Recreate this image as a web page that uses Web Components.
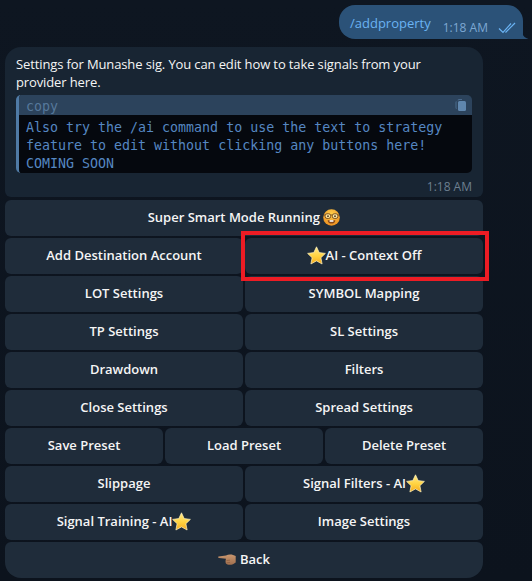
<!DOCTYPE html>
<html>
<head>
<meta charset="utf-8">
<style>
  html, body { margin: 0; height: 100%; }
  body { background: #0e1621; overflow: hidden; }
</style>
</head>
<body>
<tg-chat>
  <tg-outgoing time="1:18 AM">/addproperty</tg-outgoing>
  <tg-bubble time="1:18 AM">
    Settings for Munashe sig. You can edit how to take signals from your provider here.
    <tg-code slot="code" lang="copy">Also try the /ai command to use the text to strategy
feature to edit without clicking any buttons here!
COMING SOON</tg-code>
  </tg-bubble>
  <tg-keyboard>
    <tg-row><tg-key>Super Smart Mode Running <tg-emoji name="nerd"></tg-emoji></tg-key></tg-row>
    <tg-row>
      <tg-key>Add Destination Account</tg-key>
      <tg-key marked><tg-emoji name="star"></tg-emoji>AI - Context Off</tg-key>
    </tg-row>
    <tg-row><tg-key>LOT Settings</tg-key><tg-key>SYMBOL Mapping</tg-key></tg-row>
    <tg-row><tg-key>TP Settings</tg-key><tg-key>SL Settings</tg-key></tg-row>
    <tg-row><tg-key>Drawdown</tg-key><tg-key>Filters</tg-key></tg-row>
    <tg-row><tg-key>Close Settings</tg-key><tg-key>Spread Settings</tg-key></tg-row>
    <tg-row><tg-key>Save Preset</tg-key><tg-key>Load Preset</tg-key><tg-key>Delete Preset</tg-key></tg-row>
    <tg-row><tg-key>Slippage</tg-key><tg-key>Signal Filters - AI<tg-emoji name="star"></tg-emoji></tg-key></tg-row>
    <tg-row><tg-key>Signal Training - AI<tg-emoji name="star"></tg-emoji></tg-key><tg-key>Image Settings</tg-key></tg-row>
    <tg-row last><tg-key><tg-emoji name="hand" style="margin-right:4px"></tg-emoji>Back</tg-key></tg-row>
  </tg-keyboard>
</tg-chat>

<script>
  const FONT = '"Open Sans", "Noto Sans", sans-serif';

  customElements.define('tg-chat', class extends HTMLElement {
    constructor() {
      super();
      this.attachShadow({ mode: 'open' }).innerHTML = `
        <style>
          :host {
            display: flex;
            flex-direction: column;
            width: 532px;
            height: 581px;
            box-sizing: border-box;
            padding: 5px 0 0 5px;
            font-family: ${FONT};
            color: #f5f5f5;
            background: linear-gradient(180deg, #0e1621, #0c131d);
          }
        </style>
        <slot></slot>`;
    }
  });

  customElements.define('tg-outgoing', class extends HTMLElement {
    constructor() {
      super();
      this.attachShadow({ mode: 'open' }).innerHTML = `
        <style>
          :host {
            display: flex;
            align-self: flex-end;
            align-items: flex-start;
            position: relative;
            box-sizing: border-box;
            height: 34px;
            width: 184px;
            margin-right: 9px;
            margin-bottom: 8px;
            padding: 9px 0 0 11px;
            background: #2b5278;
            border-radius: 16px 16px 0 16px;
            font-size: 13px;
            line-height: 18px;
            color: #6ab3f3;
          }
          .time {
            margin-left: 12px;
            padding-top: 5px;
            font-size: 12px;
            line-height: 17px;
            color: #7da8d3;
            white-space: nowrap;
          }
          svg.ticks { margin: 8px 0 0 10px; flex: none; }
          svg.tail { position: absolute; right: -6px; bottom: 0; }
        </style>
        <slot></slot>
        <span class="time">${this.getAttribute('time')}</span>
        <svg class="ticks" width="18" height="12" viewBox="0 0 18 12" fill="none" stroke="#6ab3f3" stroke-width="1.2">
          <path d="M1 6.5 5 10.5 13 1.5"/><path d="M7.5 10.5 17 1"/>
        </svg>
        <svg class="tail" width="7" height="6" viewBox="0 0 7 6"><path d="M0 0C1 3 3 5 6.5 6H0Z" fill="#2b5278"/></svg>`;
    }
  });

  customElements.define('tg-bubble', class extends HTMLElement {
    constructor() {
      super();
      this.attachShadow({ mode: 'open' }).innerHTML = `
        <style>
          :host {
            display: block;
            box-sizing: border-box;
            width: 478px;
            height: 150px;
            padding: 8px 11px 0;
            background: #182533;
            border-radius: 16px 16px 6px 6px;
            font-size: 13px;
            line-height: 18px;
            letter-spacing: -.12px;
          }
          .text { height: 40px; }
          .time {
            margin-top: 5px;
            text-align: right;
            font-size: 12px;
            line-height: 17px;
            letter-spacing: 0;
            color: #6d7f8f;
          }
        </style>
        <div class="text"><slot></slot></div>
        <slot name="code"></slot>
        <div class="time">${this.getAttribute('time')}</div>`;
    }
  });

  customElements.define('tg-code', class extends HTMLElement {
    constructor() {
      super();
      this.attachShadow({ mode: 'open' }).innerHTML = `
        <style>
          :host {
            display: block;
            overflow: hidden;
            border-left: 3px solid #4f7aa5;
            border-radius: 5px;
            font-family: "DejaVu Sans Mono", "Liberation Mono", monospace;
            font-size: 13.3px;
            line-height: 18px;
            letter-spacing: 0;
            color: #5587c2;
          }
          .head {
            display: flex;
            justify-content: space-between;
            align-items: center;
            height: 20px;
            box-sizing: border-box;
            padding: 3px 5px 0 7px;
            background: #2c435c;
            color: #56789b;
          }
          pre {
            margin: 0;
            height: 58px;
            box-sizing: border-box;
            padding: 4px 7px 0;
            background: #05080e;
            font: inherit;
          }
        </style>
        <div class="head">
          <span>${this.getAttribute('lang')}</span>
          <svg width="11" height="12" viewBox="0 0 11 12" fill="#5f86ad" style="margin:-3px 1px 0 0">
            <path d="M2.5 1.5A1.5 1.5 0 0 1 4 0H7V1H4Q3.5 1 3.3 1.5Z" opacity=".6"/>
            <path d="M.5 3.5A1.5 1.5 0 0 1 1.5 2V9A1 1 0 0 0 2.5 10H2A1.5 1.5 0 0 1 .5 8.5Z" opacity=".6"/>
            <rect x="3" y="2" width="8" height="10" rx="1.5"/>
          </svg>
        </div>
        <pre><slot></slot></pre>`;
    }
  });

  customElements.define('tg-keyboard', class extends HTMLElement {
    constructor() {
      super();
      this.attachShadow({ mode: 'open' }).innerHTML = `
        <style>
          :host {
            display: flex;
            flex-direction: column;
            gap: 2px;
            width: 478px;
            margin-top: 3px;
          }
        </style>
        <slot></slot>`;
    }
  });

  customElements.define('tg-row', class extends HTMLElement {
    constructor() {
      super();
      this.attachShadow({ mode: 'open' }).innerHTML = `
        <style>
          :host { display: flex; gap: 2px; height: 36px; }
          :host([last]) ::slotted(tg-key) { border-radius: 6px 6px 16px 16px; }
        </style>
        <slot></slot>`;
    }
  });

  customElements.define('tg-key', class extends HTMLElement {
    constructor() {
      super();
      this.attachShadow({ mode: 'open' }).innerHTML = `
        <style>
          :host {
            display: flex;
            flex: 1 1 0;
            min-width: 0;
            box-sizing: border-box;
            padding-bottom: 2px;
            position: relative;
            align-items: center;
            justify-content: center;
            background: #1f2c3a;
            border-radius: 6px;
            font-size: 13px;
            font-weight: 600;
            letter-spacing: 0;
            color: #f5f5f5;
          }
          :host([marked]) { z-index: 1; }
          .label { display: inline-flex; align-items: center; white-space: pre; }
          .mark {
            display: none;
            position: absolute;
            left: -4px;
            top: -7px;
            right: -6px;
            bottom: -7px;
            border: 4px solid #ed1c24;
            pointer-events: none;
          }
          :host([marked]) .mark { display: block; }
        </style>
        <span class="label"><slot></slot></span>
        <div class="mark"></div>`;
    }
  });

  const EMOJI = {
    star: `<svg width="19" height="19" viewBox="0 0 19 19">
      <defs><linearGradient id="s" x1="0" y1="0" x2="0" y2="1"><stop offset="0" stop-color="#ffe98a"/><stop offset=".55" stop-color="#ffd23f"/><stop offset="1" stop-color="#f4a91f"/></linearGradient></defs>
      <path d="M9.5 .8 12.2 6.6 18.4 7.4 13.9 11.7 15.1 18 9.5 14.9 3.9 18 5.1 11.7 .6 7.4 6.8 6.6Z" fill="url(#s)" stroke="#fff3c0" stroke-width=".7" stroke-linejoin="round"/>
    </svg>`,
    nerd: `<svg width="17" height="17" viewBox="0 0 17 17">
      <defs><radialGradient id="n" cx=".5" cy=".3" r=".75"><stop offset="0" stop-color="#ffcf4a"/><stop offset="1" stop-color="#ea8a1e"/></radialGradient></defs>
      <circle cx="8.5" cy="8.5" r="8.3" fill="url(#n)"/>
      <g fill="#ffe7a0" stroke="#6e4519" stroke-width=".9"><rect x="2.2" y="4.8" width="5.4" height="4.6" rx="1.8"/><rect x="9.4" y="4.8" width="5.4" height="4.6" rx="1.8"/></g>
      <path d="M7.5 6h2M.8 6h1.5M14.7 6h1.5" stroke="#6e4519" stroke-width=".9"/>
      <circle cx="5" cy="7.2" r=".9" fill="#4a3520"/><circle cx="12" cy="7.2" r=".9" fill="#4a3520"/>
      <path d="M4.6 11.2h7.8Q12 14.6 8.5 14.6T4.6 11.2Z" fill="#8a4818"/>
      <path d="M6.6 11.2h3.8v1.6h-3.8Z" fill="#fff"/>
    </svg>`,
    hand: `<svg width="18" height="11" viewBox="0 0 18 11">
      <defs><linearGradient id="h" x1="0" y1="0" x2="0" y2="1"><stop offset="0" stop-color="#c9976f"/><stop offset="1" stop-color="#a06f4e"/></linearGradient></defs>
      <path d="M.5 2.6 8 1.4C10 .4 13 .2 15 1L17.7 2V8.4L15 10.2C12 11.2 9 10.8 8 9.4 7.3 8.4 7.5 6 8 4.8L1 4C0 3.8 0 2.9 .5 2.6Z" fill="url(#h)"/>
      <path d="M8.4 6.6 12 6.2M8.6 8.8 12 8.4" stroke="#84583c" stroke-width=".6" fill="none"/>
    </svg>`
  };

  customElements.define('tg-emoji', class extends HTMLElement {
    constructor() {
      super();
      this.attachShadow({ mode: 'open' }).innerHTML = `
        <style>
          :host { display: inline-flex; flex: none; }
          svg { display: block; }
        </style>
        ${EMOJI[this.getAttribute('name')]}`;
    }
  });
</script>
</body>
</html>
